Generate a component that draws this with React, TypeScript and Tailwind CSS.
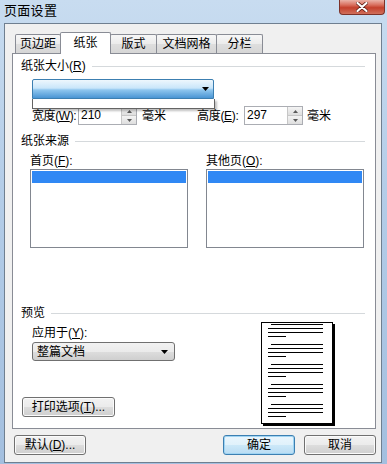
import React from 'react';

const btn =
  'h-[20px] flex items-center justify-center whitespace-nowrap rounded-[3px] border border-[#707070] bg-[linear-gradient(to_bottom,#f2f2f2_0%,#ebebeb_50%,#dddddd_51%,#cfcfcf_100%)] shadow-[inset_0_0_0_1px_#fbfbfb]';

const tab =
  '-ml-px h-[19px] flex items-center justify-center border border-b-0 border-[#898c95] bg-[linear-gradient(to_bottom,#f7f7f7_0%,#ebebeb_50%,#dedede_51%,#d6d6d6_100%)] rounded-t-[2px]';

function Arrow() {
  return (
    <svg width="7" height="4" viewBox="0 0 7 4">
      <path d="M0 0h7L3.5 4z" fill="#000" />
    </svg>
  );
}

function Spinner() {
  return (
    <div className="w-[15px] h-full flex flex-col border-l border-[#c7c7c7]">
      <div className="flex-1 flex items-center justify-center bg-[linear-gradient(to_bottom,#f4f4f4,#dedede)] border-b border-[#c7c7c7]">
        <svg width="5" height="3" viewBox="0 0 5 3"><path d="M0 3h5L2.5 0z" fill="#5a5a5a" /></svg>
      </div>
      <div className="flex-1 flex items-center justify-center bg-[linear-gradient(to_bottom,#f4f4f4,#dedede)]">
        <svg width="5" height="3" viewBox="0 0 5 3"><path d="M0 0h5L2.5 3z" fill="#5a5a5a" /></svg>
      </div>
    </div>
  );
}

function NumBox({ value }: { value: string }) {
  return (
    <div className="w-[59px] h-[19px] flex border border-[#abadb3] bg-white">
      <span className="flex-1 pl-[2px] leading-[17px]">{value}</span>
      <Spinner />
    </div>
  );
}

function GroupHead({ children }: { children: React.ReactNode }) {
  return (
    <div className="flex items-center pl-[8px] pr-[10px] h-[14px]">
      <span className="whitespace-nowrap">{children}</span>
      <div className="flex-1 ml-[6px] h-px bg-[#d5d9dc]" />
    </div>
  );
}

function PageLines() {
  return (
    <div className="flex flex-col gap-[3px]">
      <div className="ml-[9px] mr-[9px] h-px bg-black" />
      <div className="ml-[6px] mr-[9px] h-px bg-black" />
      <div className="ml-[6px] mr-[9px] h-px bg-black" />
      <div className="ml-[6px] w-[18px] h-px bg-black" />
    </div>
  );
}

export default function App() {
  return (
    <div className="w-[387px] h-[464px] overflow-hidden bg-[linear-gradient(to_bottom,#c8dcf0_0%,#b4cde8_40%,#a3bfdf_100%)] font-['Liberation_Sans','Noto_Sans_CJK_SC',sans-serif] text-[12px] leading-[14px] text-black">
      {/* Title bar */}
      <div className="h-[23px] flex items-start justify-between">
        <span className="pl-[4px] pt-[3px] text-[13px] leading-[16px] tracking-[0.3px]">页面设置</span>
        <div className="mr-[2px] w-[46px] h-[15px] rounded-b-[4px] border border-t-0 border-[#7d3229] bg-[linear-gradient(to_bottom,#eab3a8_0%,#d9705f_35%,#c4402c_55%,#d0705c_100%)] flex items-center justify-center">
          <svg width="12" height="10" viewBox="0 0 12 10">
            <path d="M1.5 1l9 8M10.5 1l-9 8" stroke="#5b1c14" strokeWidth="3.6" strokeLinecap="round" />
            <path d="M1.5 1l9 8M10.5 1l-9 8" stroke="#fff" strokeWidth="2.2" strokeLinecap="round" />
          </svg>
        </div>
      </div>

      {/* Client area */}
      <div className="ml-[4px] w-[378px] h-[440px] bg-[#f0f0f0] border border-[#6f7f90]">
        {/* Tabs */}
        <div className="flex items-end h-[21px] mt-[8px] ml-[11px]">
          <div className={`${tab} w-[46px]`}>页边距</div>
          <div className="relative z-10 -ml-px -mb-px w-[51px] h-[22px] flex justify-center pt-[3px] bg-white border border-b-0 border-[#898c95] rounded-t-[2px]">纸张</div>
          <div className={`${tab} w-[47px]`}>版式</div>
          <div className={`${tab} w-[61px]`}>文档网格</div>
          <div className={`${tab} w-[47px]`}>分栏</div>
        </div>

        {/* Panel */}
        <div className="ml-[7px] w-[364px] h-[376px] bg-white border border-[#898c95]">
          <div className="mt-[5px]">
            <GroupHead>纸张大小(<u>R</u>)</GroupHead>
          </div>

          <div className="relative ml-[19px] mt-[6px] w-[182px] h-[20px]">
            <div className="h-full flex items-center justify-end pr-[4px] rounded-t-[2px] border border-[#3c7fb1] bg-[linear-gradient(to_bottom,#eef7fd_0%,#c9e6fa_45%,#8fc6ee_55%,#4a95d4_100%)]">
              <Arrow />
            </div>
            <div className="absolute z-10 left-0 top-full w-[183px] h-[10px] bg-white border border-t-0 border-[#646464] shadow-[2px_2px_2px_rgba(0,0,0,0.25)]" />
          </div>

          <div className="flex items-center h-[19px] mt-[7px] ml-[19px]">
            <div className="w-[165px] flex items-center">
              <span className="w-[46px] whitespace-nowrap tracking-[-0.4px]">宽度(<u>W</u>):</span>
              <NumBox value="210" />
              <span className="ml-[5px]">毫米</span>
            </div>
            <span className="w-[47px] whitespace-nowrap tracking-[-0.3px]">高度(<u>E</u>):</span>
            <NumBox value="297" />
            <span className="ml-[4px]">毫米</span>
          </div>

          <div className="mt-[9px]">
            <GroupHead>纸张来源</GroupHead>
          </div>

          <div className="flex mt-[6px] ml-[17px] gap-[18px]">
            <div className="w-[158px]">
              <div>首页(<u>F</u>):</div>
              <div className="mt-[1px] h-[79px] border border-[#828790] p-[1px]">
                <div className="h-[12px] bg-[#3088f4]" />
              </div>
            </div>
            <div className="w-[158px]">
              <div>其他页(<u>O</u>):</div>
              <div className="mt-[1px] h-[79px] border border-[#828790] p-[1px]">
                <div className="h-[12px] bg-[#3088f4]" />
              </div>
            </div>
          </div>

          <div className="mt-[58px]">
            <GroupHead>预览</GroupHead>
          </div>

          <div className="flex">
            <div className="w-[248px] pl-[9px]">
              <div className="ml-[10px] mt-[6px]">应用于(<u>Y</u>):</div>
              <div className="ml-[10px] mt-[2px] w-[143px] h-[19px] flex items-center justify-between pl-[4px] pr-[6px] rounded-[3px] border border-[#707070] bg-[linear-gradient(to_bottom,#f2f2f2_0%,#ebebeb_50%,#dddddd_51%,#cfcfcf_100%)]">
                <span>整篇文档</span>
                <Arrow />
              </div>
              <div className={`${btn} mt-[36px] w-[93px] h-[19px]`}>打印选项(<u>T</u>)...</div>
            </div>
            <div className="mt-[2px] w-[72px] h-[102px] bg-white border border-black shadow-[2px_2px_0_#000] pt-px flex flex-col gap-[7px]">
              <PageLines />
              <PageLines />
              <PageLines />
              <PageLines />
              <PageLines />
            </div>
          </div>
        </div>

        {/* Bottom buttons */}
        <div className="flex mt-[6px]">
          <div className={`${btn} ml-[9px] w-[72px]`}>默认(<u>D</u>)...</div>
          <div className="ml-[137px] w-[72px] h-[20px] flex items-center justify-center rounded-[3px] border border-[#3c7fb1] bg-[linear-gradient(to_bottom,#eaf6fd_0%,#e0f1fb_50%,#cce8f8_51%,#b9dcf3_100%)] shadow-[inset_0_0_0_1px_#9fd4f3]">确定</div>
          <div className={`${btn} ml-[9px] w-[72px]`}>取消</div>
        </div>
      </div>
    </div>
  );
}
